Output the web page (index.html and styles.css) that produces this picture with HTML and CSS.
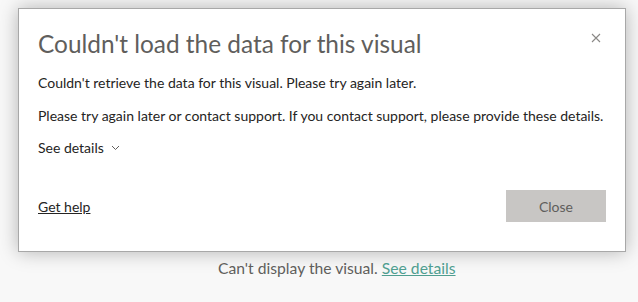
FILE: index.html
```html
<!DOCTYPE html>
<html lang="en">
<head>
    <meta charset="UTF-8">
    <title>Couldn't load the data</title>
    <link rel="stylesheet" href="styles.css">
</head>
<body>
<div class="dialog">
    <div class="dialog-header">
        <h1 class="dialog-title">Couldn't load the data for this visual</h1>
        <button class="dialog-x" aria-label="Close">
            <svg width="10" height="10" viewBox="0 0 10 10">
                <path d="M1 1 L9 9 M9 1 L1 9" stroke="#8a8886" stroke-width="1.1" fill="none"/>
            </svg>
        </button>
    </div>
    <p class="dialog-text">Couldn't retrieve the data for this visual. Please try again later.</p>
    <p class="dialog-text">Please try again later or contact support. If you contact support, please provide these details.</p>
    <div class="details-toggle">
        See details
        <svg class="chevron" width="9" height="6" viewBox="0 0 9 6">
            <path d="M1 1 L4.5 4.5 L8 1" stroke="#605e5c" stroke-width="1" fill="none"/>
        </svg>
    </div>
    <div class="dialog-footer">
        <a href="#" class="help-link">Get help</a>
        <button class="close-btn">Close</button>
    </div>
</div>

<p class="visual-message">Can't display the visual. <a href="#">See details</a></p>
</body>
</html>
```

FILE: styles.css
```css
body {
    margin: 0;
    background-color: #f8f8f8;
    font-family: "Lato", "Liberation Sans", sans-serif;
    color: #252423;
}

.dialog {
    margin: 8px 12px 0 18px;
    width: 568px;
    background: #ffffff;
    border: 1px solid #a8a8a8;
    box-shadow: 0 0 18px rgba(0, 0, 0, 0.28);
    padding: 19px 19px 29px 19px;
}

.dialog-header {
    display: flex;
    justify-content: space-between;
    align-items: flex-start;
}

.dialog-title {
    margin: 0;
    font-weight: normal;
    font-size: 24.4px;
    line-height: 32px;
    color: #605e5c;
}

.dialog-x {
    border: none;
    background: none;
    padding: 0;
    margin: 4px 4px 0 0;
    width: 12px;
    height: 12px;
    display: flex;
    align-items: center;
    justify-content: center;
}

.dialog-text {
    margin: 13px 0 0 0;
    font-size: 14px;
    line-height: 19px;
}

.dialog-text + .dialog-text {
    margin-top: 14px;
}

.details-toggle {
    margin-top: 13px;
    font-size: 14px;
    line-height: 19px;
    display: flex;
    align-items: center;
    gap: 7px;
}

.dialog-footer {
    margin-top: 33px;
    display: flex;
    justify-content: space-between;
    align-items: center;
}

.help-link {
    color: #252423;
    font-size: 14px;
}

.close-btn {
    width: 100px;
    height: 32px;
    border: none;
    background: #c8c6c4;
    color: #605e5c;
    font-family: inherit;
    font-size: 14px;
}

.visual-message {
    margin: 7px 0 0 218px;
    font-size: 15.7px;
    color: #605e5c;
}

.visual-message a {
    color: #4f9e90;
}
```
